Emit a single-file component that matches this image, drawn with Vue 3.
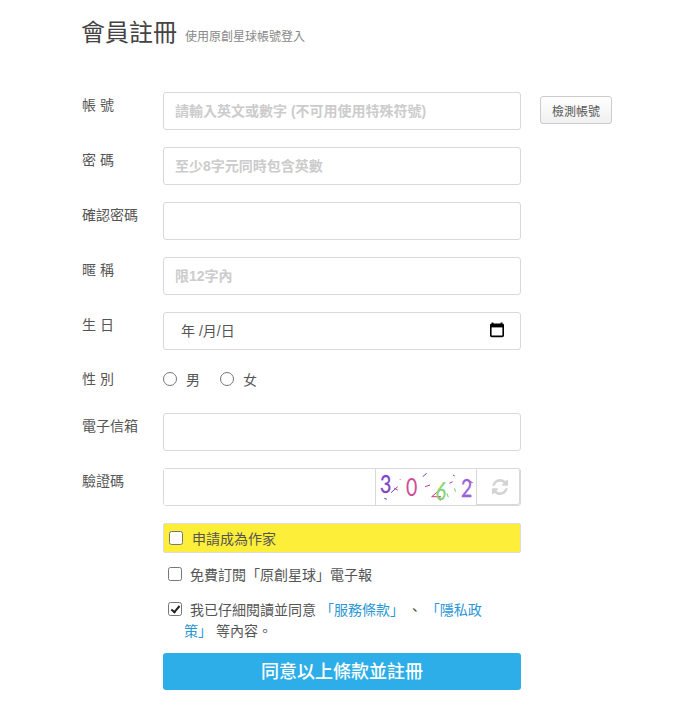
<script setup>
const purple = '#7a3fc4'
const magenta = '#c0398f'
const green = '#6fce5c'
const noise = [
  [46.7,7.7,50.7,4.3,purple],[49,17.7,54,16,magenta],[55.7,27.7,61.7,22.7,magenta],
  [55.7,27.7,65,27.7,magenta],[62.3,27,64.3,31.7,magenta],[73.3,14.3,76.7,12.7,magenta],
  [77,6,78.7,7,purple],[78.3,19.3,79.7,22.7,green],[71,24.3,72.3,28.3,green],
  [15,23.7,21.7,17.7,purple],[18.3,19.3,21.7,21,magenta],[8.3,29.3,11,30.3,purple],
  [24,10.3,24.7,11,magenta],[92.3,11.7,96.7,13.7,magenta]
]
</script>

<template>
  <main class="page">
    <header class="head">
      <h1 class="title">會員註冊</h1>
      <span class="sub">使用原創星球帳號登入</span>
    </header>

    <form class="form" @submit.prevent>
      <div class="row">
        <label class="label">帳 號</label>
        <input class="field" type="text" placeholder="請輸入英文或數字 (不可用使用特殊符號)" />
        <button class="check" type="button">檢測帳號</button>
      </div>
      <div class="row">
        <label class="label">密 碼</label>
        <input class="field" type="text" placeholder="至少8字元同時包含英數" />
      </div>
      <div class="row">
        <label class="label">確認密碼</label>
        <input class="field" type="text" />
      </div>
      <div class="row">
        <label class="label">暱 稱</label>
        <input class="field" type="text" placeholder="限12字內" />
      </div>
      <div class="row">
        <label class="label">生 日</label>
        <div class="field date">
          <span class="date-text">年 /月/日</span>
          <svg class="cal" width="16" height="16" viewBox="0 0 16 16">
            <path d="M3.5 0.5v2M12.5 0.5v2" stroke="#000" stroke-width="1.8" fill="none" />
            <rect x="1.8" y="2.4" width="12.4" height="12" rx="1" fill="none" stroke="#000" stroke-width="1.6" />
            <rect x="1.5" y="2" width="13" height="3.4" fill="#000" />
          </svg>
        </div>
      </div>
      <div class="row radios">
        <label class="label">性 別</label>
        <label class="radio"><input type="radio" name="g" />男</label>
        <label class="radio"><input type="radio" name="g" />女</label>
      </div>
      <div class="row">
        <label class="label">電子信箱</label>
        <input class="field" type="text" />
      </div>
      <div class="row">
        <label class="label">驗證碼</label>
        <div class="captcha">
          <input class="cap-input" type="text" />
          <svg class="cap-img" width="100" height="36" viewBox="0 0 100 36">
            <line v-for="(n, i) in noise" :key="i" :x1="n[0]" :y1="n[1]" :x2="n[2]" :y2="n[3]"
              :stroke="n[4]" stroke-width="1" />
            <text class="dig" fill="#7d45c8" stroke="#7d45c8" stroke-width=".3" transform="translate(4 24) scale(.78 1)">3</text>
            <text class="dig" fill="#cf4c96" transform="translate(30 27) scale(.78 1)">0</text>
            <text class="dig" fill="#84d36f" stroke="#84d36f" stroke-width=".3" transform="translate(59 30) rotate(8) scale(.72 1)">6</text>
            <text class="dig" fill="#9a62d8" stroke="#9a62d8" stroke-width=".3" transform="translate(85 28) scale(.78 1)">2</text>
          </svg>
          <button class="refresh" type="button" aria-label="refresh">
            <svg width="16" height="16" viewBox="0 0 1536 1536">
              <path fill="#d4d4d4" d="M1511 928q0 5-1 7-64 268-268 434.500t-478 166.500q-146 0-282.500-55t-243.500-157l-129 129q-19 19-45 19t-45-19-19-45v-448q0-26 19-45t45-19h448q26 0 45 19t19 45-19 45l-137 137q71 66 161 102t187 36q134 0 250-65t186-179q11-17 53-117 8-23 30-23h192q13 0 22.500 9.500t9.500 22.500zm25-800v448q0 26-19 45t-45 19h-448q-26 0-45-19t-19-45 19-45l138-138q-148-137-349-137-134 0-250 65t-186 179q-11 17-53 117-8 23-30 23h-199q-13 0-22.500-9.500t-9.500-22.500v-7q65-268 270-434.500t480-166.500q146 0 284 55.500t245 156.500l130-129q19-19 45-19t45 19 19 45z"/>
            </svg>
          </button>
        </div>
      </div>

      <div class="options">
        <label class="author"><input class="box" type="checkbox" />申請成為作家</label>
        <label class="opt news"><input class="box" type="checkbox" />免費訂閱「原創星球」電子報</label>
        <div class="opt terms">
          <input class="box" type="checkbox" checked />
          <p class="terms-line first">我已仔細閱讀並同意 <a href="#">「服務條款」</a> 、 <a href="#">「隱私政</a></p>
          <p class="terms-line"><a href="#">策」</a> 等內容。</p>
        </div>
        <button class="submit" type="submit">同意以上條款並註冊</button>
      </div>
    </form>
  </main>
</template>

<style scoped>
.page {
  padding: 14px 0 34px 82px;
  box-sizing: border-box;
  width: 694px;
  font-family: "Liberation Sans", "Noto Sans CJK TC", sans-serif;
  font-size: 14px;
  color: #555;
}
.head { display: flex; align-items: baseline; height: 78px; margin-left: -1px; padding-top: 1px; box-sizing: border-box; }
.title { margin: 0; font-size: 24px; line-height: 36px; font-weight: 400; color: #444; }
.sub { margin-left: 8px; font-size: 12px; color: #888; }
.form { display: flex; flex-direction: column; }
.row { display: flex; align-items: flex-start; margin-bottom: 17px; }
.label { width: 81px; flex: none; padding-top: 3px; line-height: 20px; color: #555; }
.field {
  box-sizing: border-box;
  width: 358px;
  height: 38px;
  padding: 0 11px;
  border: 1px solid #d9d9d9;
  border-radius: 3px;
  background: #fff;
  font: inherit;
  color: #555;
  outline: none;
}
.field::placeholder { color: #ccc; font-weight: 700; opacity: 1; }
.check {
  box-sizing: border-box;
  width: 72px;
  height: 28px;
  margin: 4px 0 0 19px;
  padding: 0;
  border: 1px solid #ccc;
  border-radius: 3px;
  background: linear-gradient(#fff, #f0f0f0);
  font: inherit;
  font-size: 12px;
  color: #555;
}
.date {
  display: flex;
  align-items: center;
  justify-content: space-between;
  padding: 0 15px 2px 17px;
}
.radios { height: 29px; align-items: center; }
.radios .label { padding-top: 0; margin-top: -5px; }
.radio { display: flex; align-items: center; margin-right: 20px; margin-top: -5px; color: #555; }
.radio input { width: 14px; height: 14px; margin: 0 9px 0 0; }
.captcha {
  box-sizing: border-box;
  display: flex;
  width: 358px;
  height: 38px;
  border: 1px solid #d9d9d9;
  border-radius: 3px;
}
.cap-input { box-sizing: border-box; width: 211px; height: 36px; border: 0; padding: 0 12px; outline: none; }
.cap-img { flex: none; border-left: 1px solid #d9d9d9; box-sizing: content-box; }
.dig { font-family: "Lato", sans-serif; font-size: 25px; }
.refresh {
  flex: 1;
  display: flex;
  align-items: center;
  justify-content: center;
  padding: 0 0 0 4px;
  border: 2px solid #d9d9d9;
  border-width: 0 1px 1px 1px;
  background: #fff;
  border-radius: 0 3px 3px 0;
}
.options { display: flex; flex-direction: column; margin-left: 81px; }
.box {
  appearance: none;
  position: relative;
  box-sizing: border-box;
  width: 14px;
  height: 14px;
  flex: none;
  background: #fff;
  border: 1px solid #767676;
  border-radius: 2.5px;
}
.box:checked::after {
  content: "";
  position: absolute;
  left: 3.5px;
  top: 0.5px;
  width: 3px;
  height: 7px;
  border: solid #222;
  border-width: 0 2px 2px 0;
  transform: rotate(40deg);
}
.author {
  box-sizing: border-box;
  display: flex;
  align-items: center;
  width: 358px;
  height: 30px;
  padding-left: 5px;
  background: #fdee3a;
  border: 1px solid #ddd;
  border-radius: 2px;
  color: #555;
}
.author input { margin: 0 9px 0 0; }
.opt { width: 358px; box-sizing: border-box; color: #555; }
.opt input { margin: 0 8px 0 0; }
.news { display: flex; align-items: center; height: 22px; margin-top: 10px; padding-left: 5px; }
.terms { position: relative; margin-top: 15px; padding-left: 21px; height: 42px; }
.terms input { position: absolute; left: 5px; top: 2px; margin: 0; }
.terms-line { margin: 0; line-height: 21px; white-space: nowrap; }
.terms-line.first { padding-left: 6px; }
.terms a { color: #2a96d5; text-decoration: none; }
.submit {
  box-sizing: border-box;
  width: 358px;
  height: 37px;
  margin-top: 11px;
  padding: 0 0 3px;
  border: 0;
  border-radius: 3px;
  background: #2eaee8;
  color: #fff;
  font: inherit;
  font-size: 18px;
  font-weight: 500;
}
</style>
